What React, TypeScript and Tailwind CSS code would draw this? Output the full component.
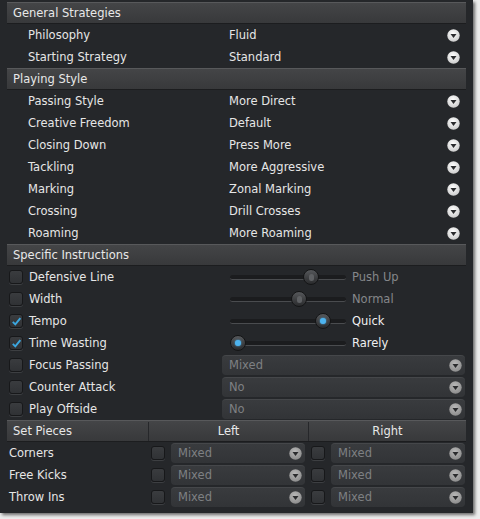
import React from "react";

const font = { fontFamily: '"DejaVu Sans", "Liberation Sans", sans-serif' };

const Arrow = ({ dim }: { dim?: boolean }) => (
  <svg width="13" height="13" viewBox="0 0 13 13" className="shrink-0">
    <defs>
      <radialGradient id={dim ? "ad" : "al"} cx="0.45" cy="0.35" r="0.7">
        <stop offset="0" stopColor={dim ? "#b9b9b9" : "#ffffff"} />
        <stop offset="1" stopColor={dim ? "#8a8a8a" : "#c9c9c9"} />
      </radialGradient>
    </defs>
    <circle cx="6.5" cy="6.5" r="6.2" fill={`url(#${dim ? "ad" : "al"})`} />
    <path d="M3.5 5.1 L9.5 5.1 L6.5 8.9 Z" fill="#2a2b2d" />
  </svg>
);

const Header = ({ title }: { title: string }) => (
  <div className="h-[22px] flex items-center pl-[6px] pt-[1px] text-[11.5px] text-[#e8e8e8] bg-gradient-to-b from-[#444547] to-[#38393b] border-t border-[#58595b] border-b border-b-[#1c1d1f]">
    {title}
  </div>
);

const SelectRow = ({ label, value }: { label: string; value: string }) => (
  <div className="h-[22px] flex items-center pt-[1px] text-[11.5px] text-[#e6e6e6]">
    <span className="pl-[21px] w-[222px]">{label}</span>
    <span className="flex-1">{value}</span>
    <span className="mr-[6px]">
      <Arrow />
    </span>
  </div>
);

const Check = ({ on }: { on?: boolean }) => (
  <span className="w-[14px] h-[14px] shrink-0 rounded-[3px] bg-gradient-to-b from-[#3a3c3f] to-[#303235] border border-[#17181a] shadow-[0_1px_0_#3d3f42] flex items-center justify-center">
    {on && (
      <svg width="11" height="11" viewBox="0 0 11 11">
        <path d="M1.8 5.8 L4.3 8.3 L9.4 2.2" stroke="#3ba7e0" strokeWidth="1.9" fill="none" />
      </svg>
    )}
  </span>
);

const Slider = ({ pos, active }: { pos: number; active?: boolean }) => (
  <div className="relative w-[116px] h-[16px] flex items-center">
    <div className="w-full h-[5px] rounded-full bg-[#1b1c1e] border-b border-[#4a4c4f]" />
    <div
      className="absolute top-0 w-[16px] h-[16px] rounded-full bg-gradient-to-b from-[#56585b] to-[#2a2b2d] border border-[#141516] flex items-center justify-center"
      style={{ left: pos - 8 }}
    >
      <span
        className={
          active
            ? "w-[6px] h-[6px] rounded-full bg-[#4db3ee] shadow-[0_0_2px_#4db3ee]"
            : "w-[5px] h-[7px] rounded-full bg-[#5e6063]"
        }
      />
    </div>
  </div>
);

const Dropdown = ({ value, w }: { value: string; w: number }) => (
  <div
    className="h-[20px] rounded-[4px] bg-gradient-to-b from-[#393b3e] to-[#323437] border-t border-[#45474a] flex items-center pl-[7px] pr-[3px] text-[11.5px] text-[#7e8083]"
    style={{ width: w }}
  >
    <span className="flex-1">{value}</span>
    <Arrow dim />
  </div>
);

const SpecRow = ({ label, on, children }: { label: string; on?: boolean; children: React.ReactNode }) => (
  <div className="h-[22px] flex items-center text-[11.5px] text-[#e6e6e6]">
    <span className="ml-[2px]">
      <Check on={on} />
    </span>
    <span className="ml-[6px] w-[193px] pt-[1px]">{label}</span>
    {children}
  </div>
);

const SliderRow = ({ label, on, pos, value }: { label: string; on?: boolean; pos: number; value: string }) => (
  <SpecRow label={label} on={on}>
    <span className="ml-[8px]">
      <Slider pos={pos} active={on} />
    </span>
    <span className={"ml-[6px] pt-[1px] " + (on ? "text-[#f0f0f0]" : "text-[#85878a]")}>{value}</span>
  </SpecRow>
);

const SetRow = ({ label }: { label: string }) => (
  <div className="h-[22px] flex items-center text-[11.5px] text-[#e6e6e6]">
    <span className="pl-[2px] w-[144px] pt-[1px]">{label}</span>
    <Check />
    <span className="ml-[6px]">
      <Dropdown value="Mixed" w={134} />
    </span>
    <span className="ml-[6px]">
      <Check />
    </span>
    <span className="ml-[6px]">
      <Dropdown value="Mixed" w={134} />
    </span>
  </div>
);

export default function App() {
  return (
    <div className="w-[480px] h-[519px] bg-[#ececec]" style={font}>
      <div className="w-[473px] h-[513px] bg-[#25272a] shadow-[2px_2px_3px_rgba(0,0,0,0.55)] pt-[2px] px-[7px]">
        <Header title="General Strategies" />
        <SelectRow label="Philosophy" value="Fluid" />
        <SelectRow label="Starting Strategy" value="Standard" />
        <Header title="Playing Style" />
        <SelectRow label="Passing Style" value="More Direct" />
        <SelectRow label="Creative Freedom" value="Default" />
        <SelectRow label="Closing Down" value="Press More" />
        <SelectRow label="Tackling" value="More Aggressive" />
        <SelectRow label="Marking" value="Zonal Marking" />
        <SelectRow label="Crossing" value="Drill Crosses" />
        <SelectRow label="Roaming" value="More Roaming" />
        <Header title="Specific Instructions" />
        <SliderRow label="Defensive Line" pos={81} value="Push Up" />
        <SliderRow label="Width" pos={69} value="Normal" />
        <SliderRow label="Tempo" on pos={93} value="Quick" />
        <SliderRow label="Time Wasting" on pos={8} value="Rarely" />
        <SpecRow label="Focus Passing">
          <Dropdown value="Mixed" w={243} />
        </SpecRow>
        <SpecRow label="Counter Attack">
          <Dropdown value="No" w={243} />
        </SpecRow>
        <SpecRow label="Play Offside">
          <Dropdown value="No" w={243} />
        </SpecRow>
        <div className="h-[22px] flex pt-[1px] text-[11.5px] text-[#e8e8e8] bg-gradient-to-b from-[#444547] to-[#38393b] border-t border-[#58595b] border-b border-b-[#1c1d1f]">
          <span className="w-[142px] pl-[6px] flex items-center border-r border-[#26272a]">Set Pieces</span>
          <span className="w-[160px] flex items-center justify-center border-r border-[#26272a]">Left</span>
          <span className="flex-1 flex items-center justify-center">Right</span>
        </div>
        <SetRow label="Corners" />
        <SetRow label="Free Kicks" />
        <SetRow label="Throw Ins" />
      </div>
    </div>
  );
}
